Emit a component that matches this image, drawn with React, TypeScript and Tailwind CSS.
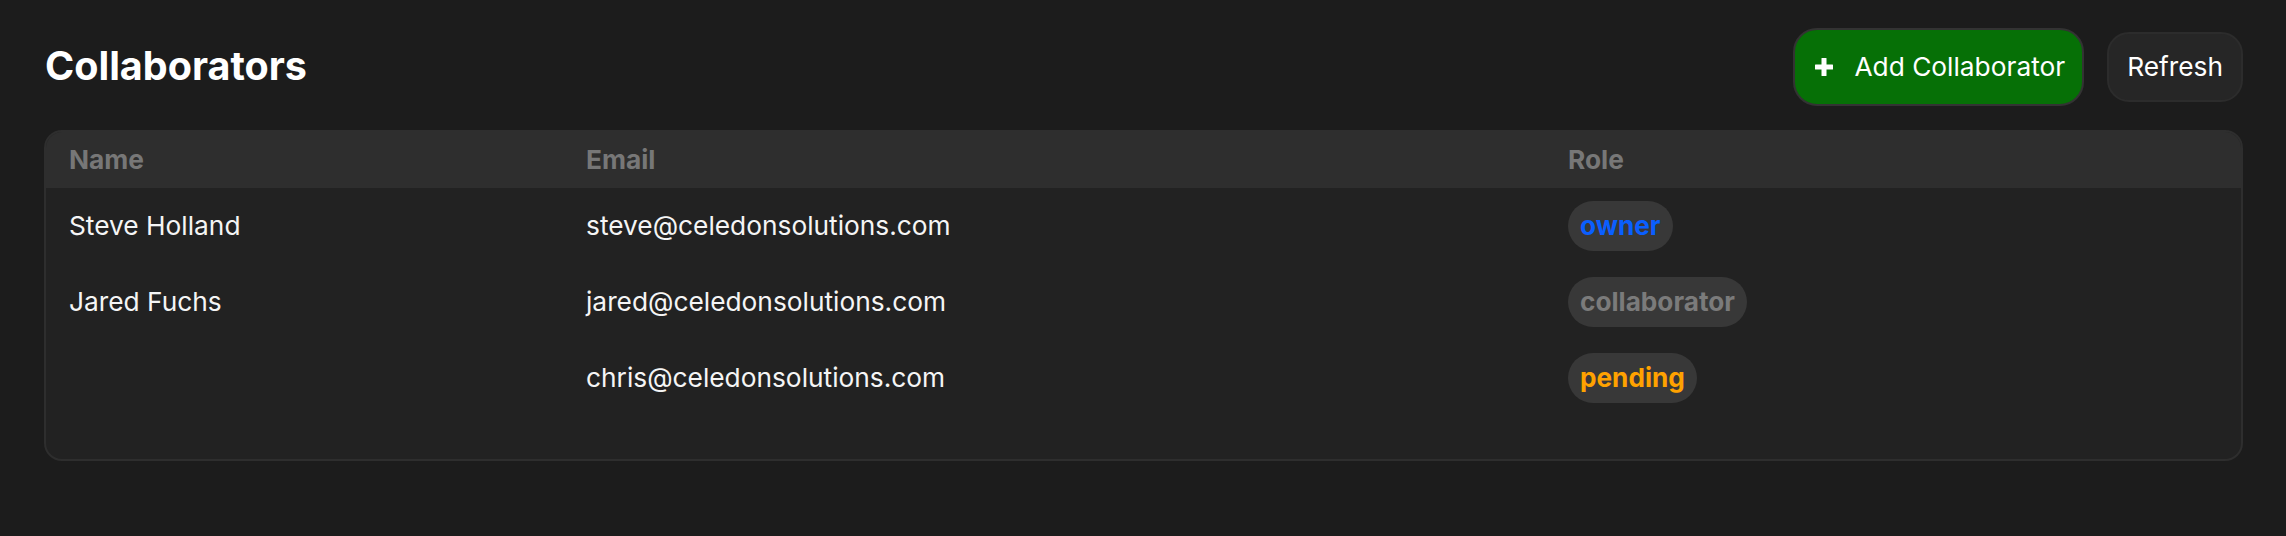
import React from "react";

type Row = { name: string; email: string; role: "owner" | "collaborator" | "pending" };

const rows: Row[] = [
  { name: "Steve Holland", email: "steve@celedonsolutions.com", role: "owner" },
  { name: "Jared Fuchs", email: "jared@celedonsolutions.com", role: "collaborator" },
  { name: "", email: "chris@celedonsolutions.com", role: "pending" },
];

function RoleBadge({ role }: { role: Row["role"] }) {
  const color =
    role === "owner" ? "text-[#0a5fff]" : role === "pending" ? "text-[#ffa200]" : "text-[#7b7b7b]";
  return (
    <span
      className={`inline-flex items-center h-[50px] px-[12px] rounded-full bg-[#383838] font-bold text-[26.2px] leading-none ${color}`}
    >
      {role}
    </span>
  );
}

function PlusIcon() {
  return (
    <svg width="18" height="18" viewBox="0 0 18 18" className="shrink-0">
      <rect x="6.5" y="0" width="5" height="18" rx="0.5" fill="#ffffff" />
      <rect x="0" y="6.5" width="18" height="5" rx="0.5" fill="#ffffff" />
    </svg>
  );
}

export default function App() {
  return (
    <div
      className="min-h-[536px] w-full bg-[#1c1c1c] pt-[28px] pl-[44px] pr-[43px] text-white"
      style={{ fontFamily: "Inter, 'Noto Sans', 'Liberation Sans', sans-serif" }}
    >
      <div className="flex items-center justify-between h-[78px]">
        <h1 className="text-[39.5px] font-bold leading-none text-white pl-[1px]">Collaborators</h1>
        <div className="flex items-center gap-[23px]">
          <button className="flex items-center h-[78px] pl-[20px] pr-[17px] gap-[21px] rounded-[24px] border-2 border-[#333333] bg-[#067006] text-white text-[26.3px] leading-none">
            <PlusIcon />
            <span>Add Collaborator</span>
          </button>
          <button className="flex items-center h-[70px] px-[18px] rounded-[22px] border-2 border-[#2c2c2c] bg-[#262626] text-white text-[26.3px] leading-none">
            Refresh
          </button>
        </div>
      </div>

      <div className="mt-[24px] rounded-[18px] border-2 border-[#2e2e2e] bg-[#222222] overflow-hidden pb-[43px]">
        <div className="grid grid-cols-[517px_982px_1fr] h-[56px] items-center bg-[#2e2e2e] text-[#777777] font-bold text-[26.3px] leading-none">
          <div className="px-[23px]">Name</div>
          <div className="px-[23px]">Email</div>
          <div className="px-[23px]">Role</div>
        </div>
        {rows.map((r) => (
          <div
            key={r.email}
            className="grid grid-cols-[517px_982px_1fr] h-[76px] items-center text-[26.3px] leading-none text-[#f5f5f5]"
          >
            <div className="px-[23px]">{r.name}</div>
            <div className="px-[23px]">{r.email}</div>
            <div className="px-[23px]">
              <RoleBadge role={r.role} />
            </div>
          </div>
        ))}
      </div>
    </div>
  );
}
